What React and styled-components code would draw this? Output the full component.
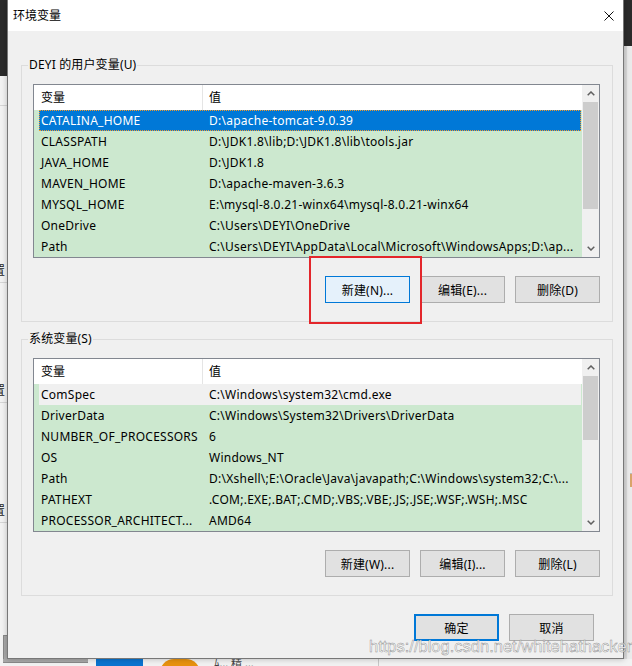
import React from "react"
import styled, { createGlobalStyle } from "styled-components"

const GlobalStyle = createGlobalStyle`
  *, *::before, *::after { box-sizing: border-box; }
  html, body { margin: 0; padding: 0; background: #f0f0f0; overflow: hidden; }
  body {
    font-family: "Noto Sans", "Noto Sans CJK SC", sans-serif;
    font-size: 12px;
    color: #000;
  }
`

const userVars = [
  { name: "CATALINA_HOME", value: "D:\\apache-tomcat-9.0.39", state: "selected" },
  { name: "CLASSPATH", value: "D:\\JDK1.8\\lib;D:\\JDK1.8\\lib\\tools.jar" },
  { name: "JAVA_HOME", value: "D:\\JDK1.8" },
  { name: "MAVEN_HOME", value: "D:\\apache-maven-3.6.3" },
  { name: "MYSQL_HOME", value: "E:\\mysql-8.0.21-winx64\\mysql-8.0.21-winx64" },
  { name: "OneDrive", value: "C:\\Users\\DEYI\\OneDrive" },
  { name: "Path", value: "C:\\Users\\DEYI\\AppData\\Local\\Microsoft\\WindowsApps;D:\\ap..." },
]

const systemVars = [
  { name: "ComSpec", value: "C:\\Windows\\system32\\cmd.exe", state: "inactive" },
  { name: "DriverData", value: "C:\\Windows\\System32\\Drivers\\DriverData" },
  { name: "NUMBER_OF_PROCESSORS", value: "6" },
  { name: "OS", value: "Windows_NT" },
  { name: "Path", value: "D:\\Xshell\\;E:\\Oracle\\Java\\javapath;C:\\Windows\\system32;C:\\..." },
  { name: "PATHEXT", value: ".COM;.EXE;.BAT;.CMD;.VBS;.VBE;.JS;.JSE;.WSF;.WSH;.MSC" },
  { name: "PROCESSOR_ARCHITECT...", value: "AMD64" },
]

const Chevron = ({ down }) => (
  <svg width="8" height="5" viewBox="0 0 8 5">
    <path
      d={down ? "M0.7 0.7 L4 4 L7.3 0.7" : "M0.7 4.3 L4 1 L7.3 4.3"}
      fill="none"
      stroke="#606060"
      strokeWidth="1.5"
    />
  </svg>
)

const CloseIcon = () => (
  <svg width="10" height="10" viewBox="0 0 10 10">
    <path d="M0.5 0.5 L9.5 9.5 M9.5 0.5 L0.5 9.5" stroke="#111" strokeWidth="1" />
  </svg>
)

const VarList = ({ rows, thumb }) => (
  <ListView>
    <ListContent>
      <HeaderRow>
        <HeaderCell $first>变量</HeaderCell>
        <HeaderCell>值</HeaderCell>
      </HeaderRow>
      {rows.map((r, i) => (
        <Row key={i} $state={r.state}>
          <NameCell>{r.name}</NameCell>
          <ValueCell>{r.value}</ValueCell>
        </Row>
      ))}
    </ListContent>
    <ScrollBar>
      <ArrowBox><Chevron /></ArrowBox>
      <Track>
        <Thumb style={{ height: thumb }} />
      </Track>
      <ArrowBox><Chevron down /></ArrowBox>
    </ScrollBar>
  </ListView>
)

export default function App() {
  return (
    <Desktop>
      <GlobalStyle />
      <LeftStrip>
        <DarkBand $h={76} />
        <SideCell $h={30} />
        <SideCell $h={177}><CutGlyph>置</CutGlyph></SideCell>
        <SideCell $h={120}><CutGlyph>置</CutGlyph></SideCell>
        <SideCell $h={120}><CutGlyph>置</CutGlyph></SideCell>
        <GrayTile />
      </LeftStrip>

      <Window>
        <TitleBar>
          <Title>环境变量</Title>
          <CloseIcon />
        </TitleBar>
        <Body>
          <Group $top={26}>
            <Legend>DEYI 的用户变量(U)</Legend>
            <GroupInner>
              <VarList rows={userVars} thumb={107} />
              <ButtonRow>
                <Button $variant="hot">新建(N)...</Button>
                <Button>编辑(E)...</Button>
                <Button>删除(D)</Button>
              </ButtonRow>
            </GroupInner>
          </Group>
          <Group $top={9}>
            <Legend>系统变量(S)</Legend>
            <GroupInner>
              <VarList rows={systemVars} thumb={64} />
              <ButtonRow>
                <Button>新建(W)...</Button>
                <Button>编辑(I)...</Button>
                <Button>删除(L)</Button>
              </ButtonRow>
            </GroupInner>
          </Group>
          <Footer>
            <Button $variant="default">确定</Button>
            <Button>取消</Button>
          </Footer>
        </Body>
      </Window>

      <RightStrip>
        <DarkBand $h={46} />
        <RightPane>
          <OrangeMark />
        </RightPane>
      </RightStrip>

      <BottomStrip>
        <GrayBox />
        <BlueTile />
        <OrangeBadge />
        <DimText>ﾑ… 精 …</DimText>
        <Divider />
      </BottomStrip>

      <Annotation />
      <Watermark>https://blog.csdn.net/whitehathacker</Watermark>
    </Desktop>
  )
}

const Desktop = styled.div`
  position: relative;
  width: 632px;
  height: 666px;
  display: grid;
  grid-template-columns: 7px 617px 8px;
  grid-template-rows: 659px 7px;
  overflow: hidden;
  background: #f0f0f0;
`

const LeftStrip = styled.div`
  display: flex;
  flex-direction: column;
  background: #f3f3f3;
  overflow: hidden;
`

const DarkBand = styled.div`
  height: ${(p) => p.$h}px;
  flex-shrink: 0;
  background: #2b2b2b;
`

const SideCell = styled.div`
  height: ${(p) => p.$h}px;
  flex-shrink: 0;
  border-bottom: 1px solid #d6d6d6;
  display: flex;
  align-items: flex-end;
  padding-bottom: 4px;
`

const CutGlyph = styled.span`
  margin-left: -7px;
  font-size: 12px;
  line-height: 14px;
  color: #222;
`

const GrayTile = styled.div`
  margin-top: auto;
  margin-left: 3px;
  height: 24px;
  background: #a9a9a9;
  border-top: 1px solid #8a8a8a;
  border-left: 1px solid #8a8a8a;
`

const Window = styled.div`
  display: flex;
  flex-direction: column;
  background: #f0f0f0;
  border: 1px solid #777;
  border-top: none;
  box-shadow: 0 0 6px rgba(0, 0, 0, 0.25);
  z-index: 1;
`

const TitleBar = styled.div`
  height: 31px;
  flex-shrink: 0;
  display: flex;
  align-items: center;
  justify-content: space-between;
  padding: 0 9px 0 5px;
  background: #fff;
`

const Title = styled.span`
  font-size: 12px;
  line-height: 16px;
`

const Body = styled.div`
  flex: 1;
  display: flex;
  flex-direction: column;
  padding: 0 10px 17px 13px;
`

const Group = styled.fieldset`
  margin: ${(p) => p.$top}px 0 0;
  padding: 0;
  border: 1px solid #dcdcdc;
  min-width: 0;
`

const Legend = styled.legend`
  margin-left: 6px;
  padding: 0 1px;
  font-size: 12px;
  line-height: 16px;
  letter-spacing: 0.15px;
`

const GroupInner = styled.div`
  padding: 11px 12px 18px 11px;
`

const ListView = styled.div`
  height: 174px;
  display: flex;
  border: 1px solid #828790;
  background: #cce8cf;
`

const ListContent = styled.div`
  flex: 1;
  min-width: 0;
  display: flex;
  flex-direction: column;
`

const HeaderRow = styled.div`
  height: 25px;
  flex-shrink: 0;
  display: flex;
  background: #fff;
`

const HeaderCell = styled.div`
  line-height: 25px;
  padding-left: ${(p) => (p.$first ? 7 : 6)}px;
  width: ${(p) => (p.$first ? "169px" : "auto")};
  flex: ${(p) => (p.$first ? "none" : 1)};
  border-right: ${(p) => (p.$first ? "1px solid #e5e5e5" : "none")};
`

const rowBg = {
  selected: "#0078d7",
  inactive: "#f0f0f0",
}

const Row = styled.div`
  height: 21px;
  flex-shrink: 0;
  margin: 0 1px 0 5px;
  display: flex;
  align-items: center;
  white-space: nowrap;
  letter-spacing: 0.25px;
  background: ${(p) => rowBg[p.$state] || "transparent"};
  color: ${(p) => (p.$state === "selected" ? "#fff" : "#000")};
  outline: ${(p) => (p.$state === "selected" ? "1px dotted #f39a2a" : "none")};
  outline-offset: -1px;
`

const NameCell = styled.div`
  width: 164px;
  flex-shrink: 0;
  padding-left: 2px;
  overflow: hidden;
`

const ValueCell = styled.div`
  flex: 1;
  min-width: 0;
  padding: 0 4px 0 6px;
  overflow: hidden;
`

const ScrollBar = styled.div`
  width: 17px;
  flex-shrink: 0;
  display: flex;
  flex-direction: column;
  background: #f0f0f0;
`

const ArrowBox = styled.div`
  height: 17px;
  flex-shrink: 0;
  display: flex;
  align-items: center;
  justify-content: center;
`

const Track = styled.div`
  flex: 1;
  padding: 0 1px;
`

const Thumb = styled.div`
  background: #cdcdcd;
`

const ButtonRow = styled.div`
  display: flex;
  justify-content: flex-end;
  gap: 10px;
  margin-top: 18px;
`

const Footer = styled.div`
  display: flex;
  justify-content: flex-end;
  gap: 10px;
  margin-top: 18px;
  padding-right: 19px;
`

const buttonLook = {
  hot: "background: #e5f1fb; border: 1px solid #0078d7;",
  default: "background: #e1e1e1; border: 2px solid #0078d7;",
}

const Button = styled.button`
  width: 85px;
  height: 27px;
  padding: 0;
  font-family: inherit;
  font-size: 12px;
  letter-spacing: 0.2px;
  color: #000;
  background: #e1e1e1;
  border: 1px solid #adadad;
  ${(p) => buttonLook[p.$variant] || ""}
`

const RightStrip = styled.div`
  display: flex;
  flex-direction: column;
  overflow: hidden;
`

const RightPane = styled.div`
  flex: 1;
  background: #ebebeb;
  border-left: 3px solid #dadada;
  padding-top: 427px;
  display: flex;
  justify-content: flex-end;
`

const OrangeMark = styled.div`
  width: 2px;
  height: 14px;
  background: #d9a46a;
  border-top: 1px solid #bdbdbd;
`

const BottomStrip = styled.div`
  grid-column: 1 / -1;
  display: flex;
  align-items: flex-start;
  background: #f2f2f2;
  overflow: hidden;
`

const GrayBox = styled.div`
  width: 85px;
  height: 4px;
  margin-left: 3px;
  background: #a9a9a9;
  border-bottom: 1px solid #8a8a8a;
`

const BlueTile = styled.div`
  width: 47px;
  height: 7px;
  margin-left: 8px;
  background: #0a74d0;
`

const OrangeBadge = styled.div`
  width: 40px;
  height: 14px;
  margin-left: 17px;
  border-radius: 20px 20px 0 0;
  background: #e8920f;
`

const DimText = styled.div`
  margin-left: 14px;
  font-size: 11px;
  line-height: 7px;
  color: #444;
  overflow: hidden;
  height: 7px;
`

const Divider = styled.div`
  width: 1px;
  height: 7px;
  margin-left: auto;
  margin-right: 253px;
  background: #c8c8c8;
`

const Annotation = styled.div`
  position: absolute;
  left: 309px;
  top: 256px;
  width: 113px;
  height: 68px;
  border: 2px solid #e3262b;
  z-index: 2;
  pointer-events: none;
`

const Watermark = styled.div`
  position: absolute;
  left: 369px;
  top: 636px;
  font-family: "Liberation Sans", Arial, sans-serif;
  font-size: 16.5px;
  line-height: 20px;
  white-space: nowrap;
  color: rgba(255, 255, 255, 0.92);
  -webkit-text-stroke: 0.5px rgba(110, 110, 110, 0.75);
  z-index: 3;
  pointer-events: none;
`
